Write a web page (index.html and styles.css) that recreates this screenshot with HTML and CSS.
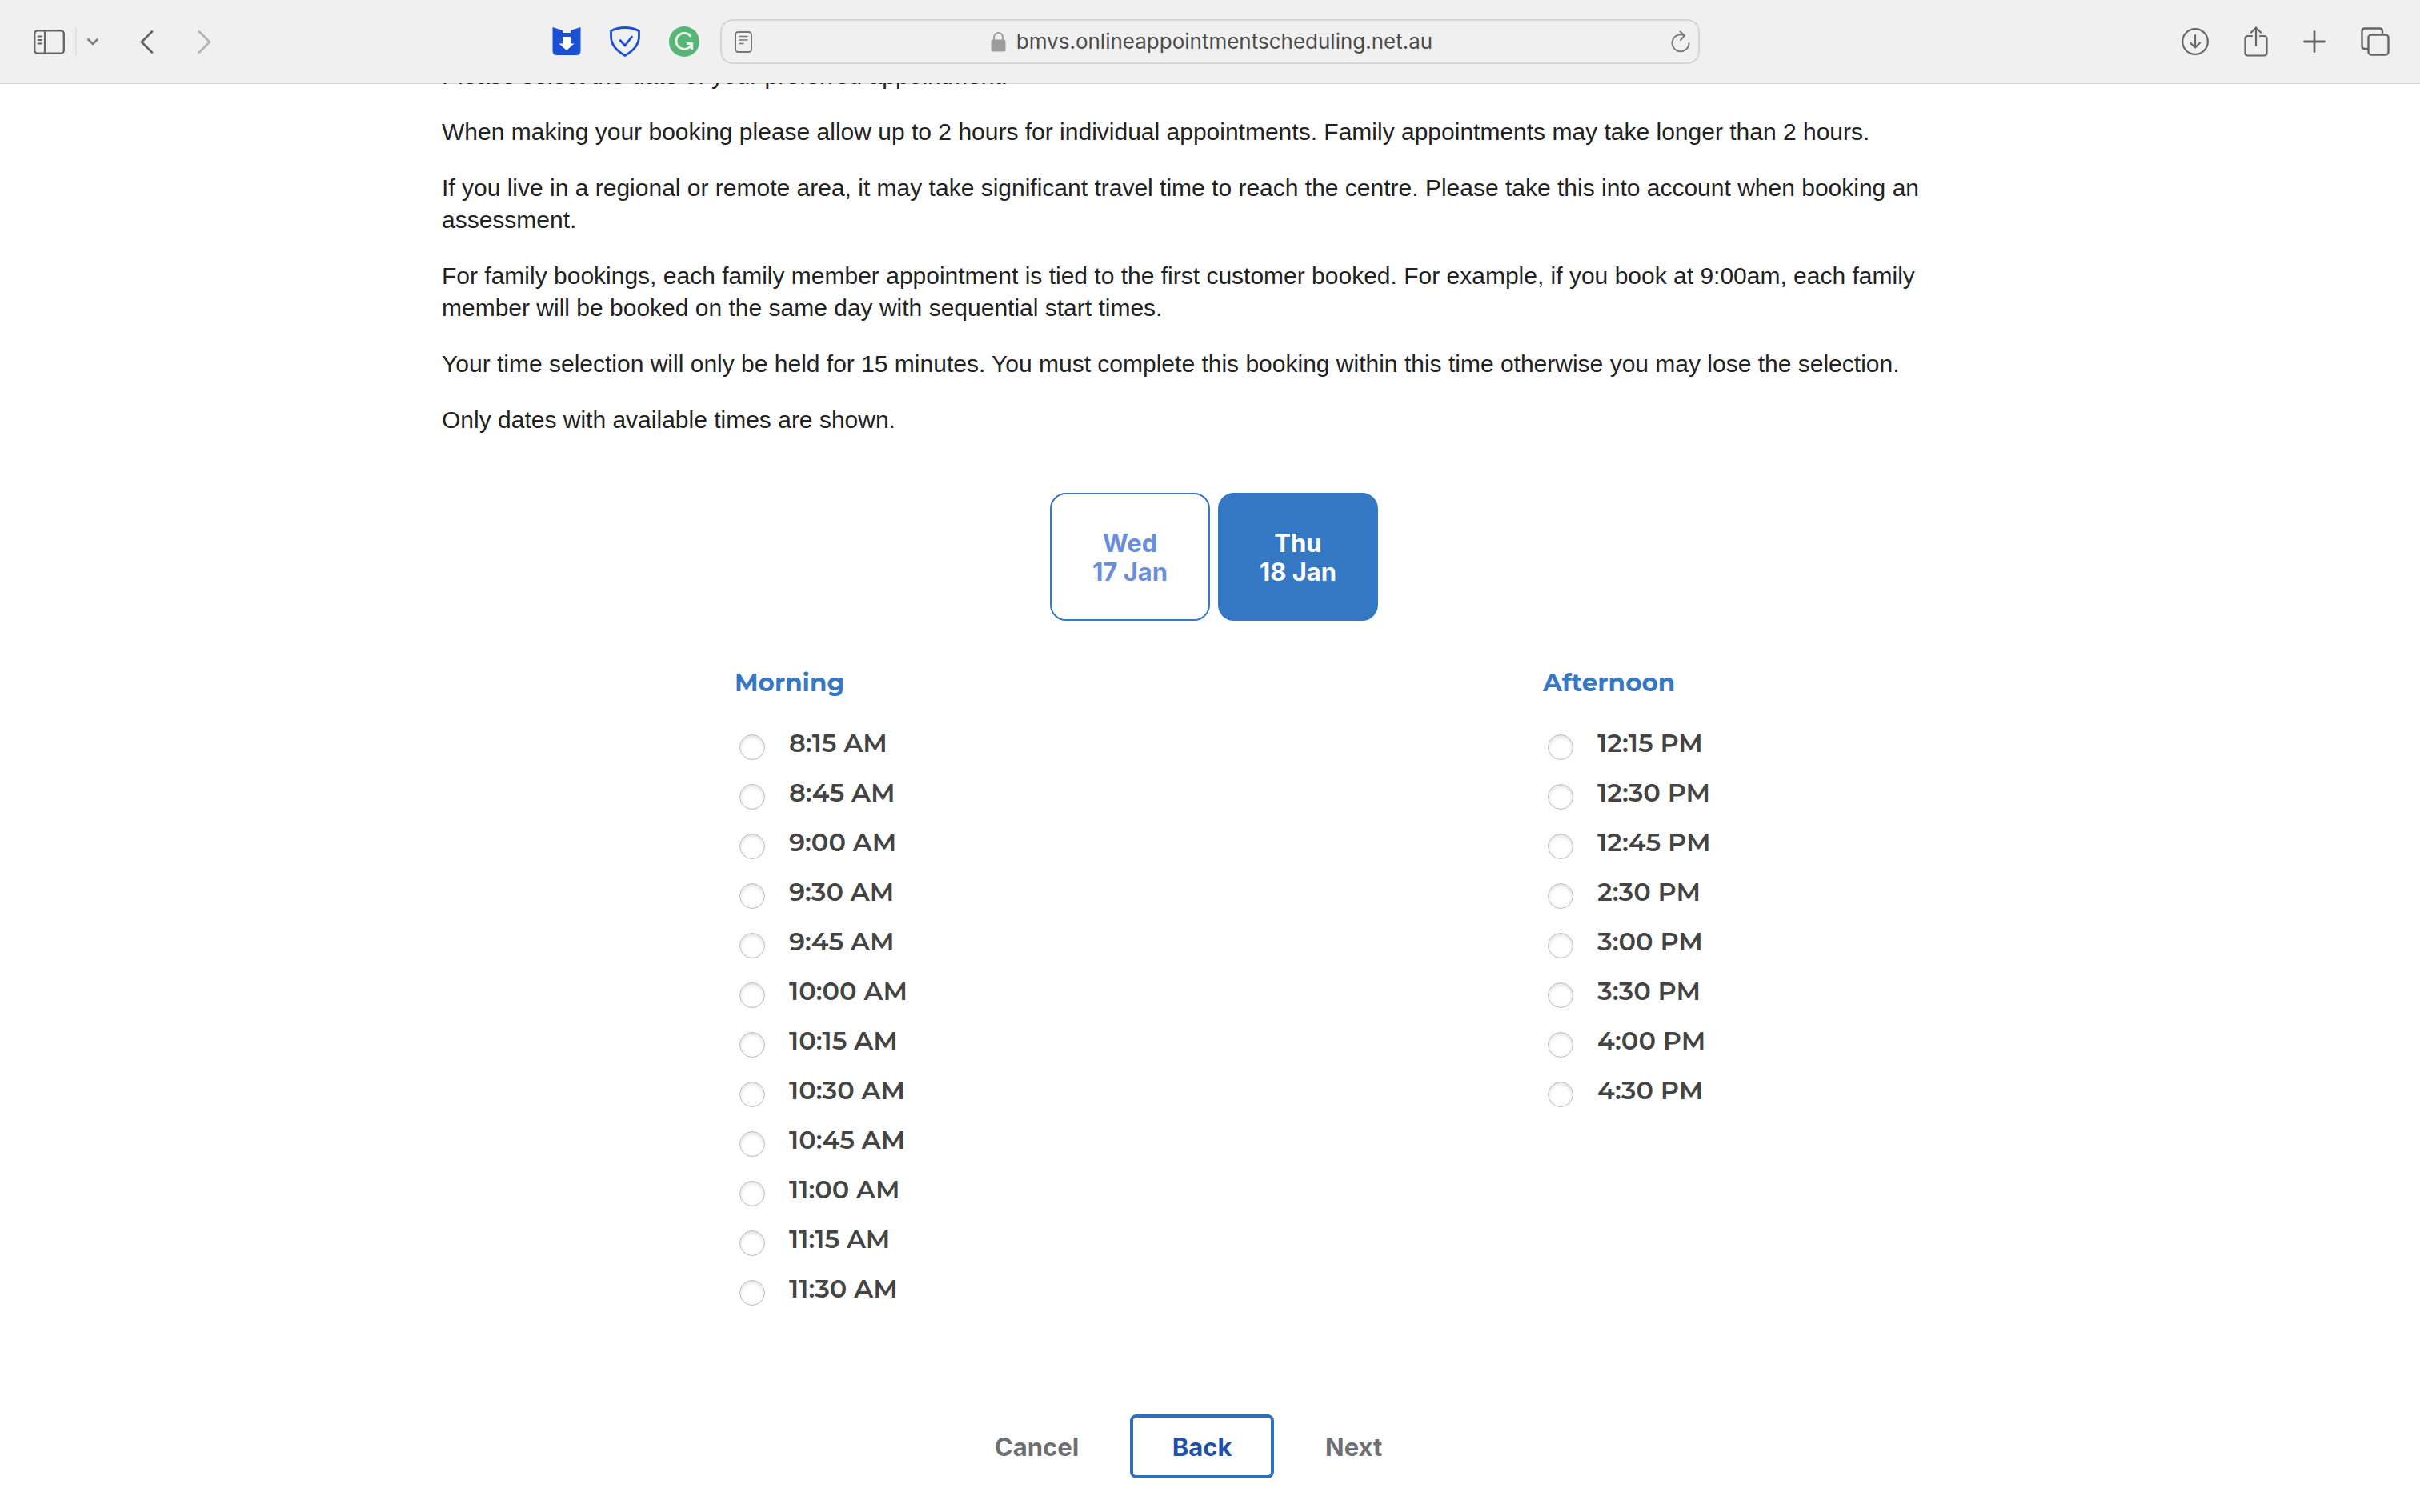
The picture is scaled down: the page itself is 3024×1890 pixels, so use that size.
FILE: index.html
```html
<!DOCTYPE html>
<html lang="en">
<head>
<meta charset="utf-8">
<meta name="viewport" content="width=device-width, initial-scale=1">
<title>Select a date and time</title>
<link rel="stylesheet" href="styles.css">
</head>
<body>
<header class="toolbar">
  <div class="tools tools-start">
    <button class="tool sidebar" aria-label="Show sidebar"><svg width="39" height="31" viewBox="0 0 39 31" fill="none" stroke="#666"><rect x="1.2" y="1.2" width="36.6" height="28.6" rx="4" stroke-width="2.4"/><path d="M14 1v29" stroke-width="2.2"/><path d="M5.5 8.500h4.500M5.500 13h4.500M5.500 17.500h4.500" stroke-width="1.800" stroke-linecap="round"/></svg></button>
    <span class="divider"></span>
    <button class="tool tabgroup" aria-label="Tab groups"><svg width="14" height="9" viewBox="0 0 14 9" fill="none" stroke="#7f7f84" stroke-width="2.800" stroke-linecap="round" stroke-linejoin="round"><path d="M1.500 1.500L7 7l5.500-5.500"/></svg></button>
    <button class="tool back" aria-label="Go back"><svg width="17" height="29" viewBox="0 0 17 29" fill="none" stroke="#666" stroke-width="2.800" stroke-linecap="round" stroke-linejoin="round"><path d="M15 1.500L2 14.500l13 13"/></svg></button>
    <button class="tool forward" aria-label="Go forward"><svg width="17" height="29" viewBox="0 0 17 29" fill="none" stroke="#b4b4b4" stroke-width="2.800" stroke-linecap="round" stroke-linejoin="round"><path d="M2 1.500l13 13-13 13"/></svg></button>
  </div>
  <div class="tools extensions">
    <button class="tool" aria-label="Downloader"><svg width="36" height="38" viewBox="0 0 36 38"><path d="M.500 1L13 5v3h10V5l12.500-4v29.500q0 5.500-5.500 5.500H6q-5.500 0-5.500-5.500z" fill="#1a4fd6"/><path d="M13 13h10v8.500h4.500L18 30l-9.500-8.500H13z" fill="#fff" /></svg></button>
    <button class="tool" aria-label="Ad blocker"><svg width="38" height="38" viewBox="0 0 38 38" fill="none" stroke="#1a4fd6" stroke-width="2.800" stroke-linejoin="round" stroke-linecap="round"><path d="M1.500 5.500Q10 1.500 19 1.500t17.500 4v7q0 14-17.500 24Q1.500 26.500 1.500 12.500z"/><path d="M13 17.500l6 6.500 8.500-11"/></svg></button>
    <button class="tool" aria-label="Writing assistant"><svg width="38" height="38" viewBox="0 0 38 38" fill="none"><circle cx="19" cy="19" r="19" fill="#57b576"/><path d="M27.500 13a10 10 0 1 0 1 8.500H22M28.800 21v8" stroke="#f0f0f0" stroke-width="2.800"/></svg></button>
  </div>
  <div class="address">
    <button class="tool" aria-label="Show reader"><svg width="22" height="27" viewBox="0 0 22 27" fill="none" stroke="#777"><rect x="1" y="1" width="20" height="25" rx="3.500" stroke-width="2"/><path d="M5.500 6.500h11M5.500 11h11M5.500 15.500h6" stroke-width="1.500"/></svg></button>
    <div class="site">
      <svg width="19" height="26" viewBox="0 0 19 26"><rect x=".5" y="10.500" width="18" height="15" rx="2.500" fill="#9d9d9d"/><path d="M4 12V7.500a5.500 5.500 0 0 1 11 0V12" fill="none" stroke="#9d9d9d" stroke-width="2"/></svg>
      <span>bmvs.onlineappointmentscheduling.net.au</span>
    </div>
    <button class="tool" aria-label="Reload"><svg width="24" height="28" viewBox="0 0 24 28" fill="none" stroke="#7c7c7c" stroke-width="2" stroke-linecap="round" stroke-linejoin="round"><path d="M16.500 6.300A10.500 10.500 0 1 0 22.500 16"/><path d="M11.500 1.500l5.500 5-5 5.500"/></svg></button>
  </div>
  <div class="tools tools-end">
    <button class="tool" aria-label="Downloads"><svg width="34" height="34" viewBox="0 0 34 34" fill="none" stroke="#666" stroke-width="2.200" stroke-linecap="round" stroke-linejoin="round"><circle cx="17" cy="17" r="15.800"/><path d="M17 9v15.500M11 18.500l6 6 6-6"/></svg></button>
    <button class="tool" aria-label="Share"><svg width="30" height="38" viewBox="0 0 30 38" fill="none" stroke="#666" stroke-width="2.200" stroke-linecap="round" stroke-linejoin="round"><path d="M10 12H5q-3.500 0-3.500 3.500V33q0 3.500 3.500 3.500h20q3.500 0 3.500-3.500V15.500Q28.500 12 25 12h-5M15 24V2M9 7.500L15 1.500l6 6"/></svg></button>
    <button class="tool" aria-label="New tab"><svg width="28" height="28" viewBox="0 0 28 28" fill="none" stroke="#666" stroke-width="2.800" stroke-linecap="round"><path d="M14 1.500v25M1.500 14h25"/></svg></button>
    <button class="tool" aria-label="Tab overview"><svg width="36" height="36" viewBox="0 0 36 36" fill="none" stroke="#666" stroke-width="2.400"><path d="M9.500 27H5q-3.500 0-3.500-3.500V5Q1.500 1.500 5 1.500h18.500Q27 1.500 27 5v4.500"/><rect x="9.500" y="9.500" width="25" height="25" rx="3.500"/></svg></button>
  </div>
</header>

<main class="page">
  <div class="intro">
    <p>Please select the date of your preferred appointment.</p>
    <p>When making your booking please allow up to 2 hours for individual appointments. Family appointments may take longer than 2 hours.</p>
    <p>If you live in a regional or remote area, it may take significant travel time to reach the centre. Please take this into account when booking an assessment.</p>
    <p>For family bookings, each family member appointment is tied to the first customer booked. For example, if you book at 9:00am, each family member will be booked on the same day with sequential start times.</p>
    <p>Your time selection will only be held for 15 minutes. You must complete this booking within this time otherwise you may lose the selection.</p>
    <p>Only dates with available times are shown.</p>
  </div>

  <div class="dates">
    <button class="date">Wed<br>17 Jan</button>
    <button class="date date-selected" aria-pressed="true">Thu<br>18 Jan</button>
  </div>

  <form class="booking">
    <div class="times">
      <fieldset class="slots">
        <legend>Morning</legend>
        <label class="slot"><input type="radio" name="time"><span>8:15 AM</span></label>
        <label class="slot"><input type="radio" name="time"><span>8:45 AM</span></label>
        <label class="slot"><input type="radio" name="time"><span>9:00 AM</span></label>
        <label class="slot"><input type="radio" name="time"><span>9:30 AM</span></label>
        <label class="slot"><input type="radio" name="time"><span>9:45 AM</span></label>
        <label class="slot"><input type="radio" name="time"><span>10:00 AM</span></label>
        <label class="slot"><input type="radio" name="time"><span>10:15 AM</span></label>
        <label class="slot"><input type="radio" name="time"><span>10:30 AM</span></label>
        <label class="slot"><input type="radio" name="time"><span>10:45 AM</span></label>
        <label class="slot"><input type="radio" name="time"><span>11:00 AM</span></label>
        <label class="slot"><input type="radio" name="time"><span>11:15 AM</span></label>
        <label class="slot"><input type="radio" name="time"><span>11:30 AM</span></label>
      </fieldset>
      <fieldset class="slots">
        <legend>Afternoon</legend>
        <label class="slot"><input type="radio" name="time"><span>12:15 PM</span></label>
        <label class="slot"><input type="radio" name="time"><span>12:30 PM</span></label>
        <label class="slot"><input type="radio" name="time"><span>12:45 PM</span></label>
        <label class="slot"><input type="radio" name="time"><span>2:30 PM</span></label>
        <label class="slot"><input type="radio" name="time"><span>3:00 PM</span></label>
        <label class="slot"><input type="radio" name="time"><span>3:30 PM</span></label>
        <label class="slot"><input type="radio" name="time"><span>4:00 PM</span></label>
        <label class="slot"><input type="radio" name="time"><span>4:30 PM</span></label>
      </fieldset>
    </div>
    <div class="actions">
      <button type="button" class="action">Cancel</button>
      <button type="button" class="action action-outline">Back</button>
      <button type="submit" class="action">Next</button>
    </div>
  </form>
</main>
</body>
</html>
```
FILE: styles.css
```css
* { box-sizing: border-box; }

body {
  margin: 0;
  background: #fff;
  color: #222;
  font-family: "Liberation Sans", Arial, sans-serif;
  font-size: 30px;
  line-height: 40px;
}

button { font: inherit; cursor: pointer; }
svg { display: block; }

/* Browser toolbar */
.toolbar {
  position: sticky;
  top: 0;
  z-index: 1;
  display: grid;
  grid-template-columns: 1fr 1224px 1fr;
  align-items: center;
  height: 105px;
  background: #f0f0f0;
  background-clip: padding-box;
  border-bottom: 1px solid rgba(0, 0, 0, .16);
}
.tool { padding: 0; border: 0; background: none; }
.tools { display: flex; align-items: center; }
.tools-start { grid-area: 1 / 1; padding-left: 42px; }
.divider { width: 2px; height: 36px; margin: 0 13px; background: #e2e2e2; }
.back { margin-left: 52px; }
.forward { margin-left: 55px; }
.extensions { grid-area: 1 / 1; justify-self: end; gap: 36px; padding-right: 26px; }
.address {
  grid-area: 1 / 2;
  display: flex;
  align-items: center;
  justify-content: space-between;
  height: 56px;
  padding: 0 10px 0 16px;
  border: 2px solid #d4d4d4;
  border-radius: 16px;
}
.site {
  display: flex;
  align-items: center;
  gap: 13px;
  color: #4c4c4c;
  font-family: Inter, sans-serif;
  font-size: 26px;
  line-height: 42px;
}
.tools-end { grid-area: 1 / 3; justify-self: end; gap: 44px; padding-right: 38px; }

/* Appointment page */
.page {
  max-width: 1920px;
  margin: -30px auto 0;
  padding-bottom: 40px;
}
.intro { display: grid; gap: 30px; }
.intro p { margin: 0; }

.dates {
  display: flex;
  justify-content: center;
  gap: 10px;
  margin-top: 71px;
  padding-left: 10px;
}
.date {
  width: 200px;
  height: 160px;
  padding: 2px 0 0;
  border: 2px solid #3578c4;
  border-radius: 20px;
  background: #fff;
  color: #6b8ddd;
  font: bold 31px/36px Inter, sans-serif;
}
.date-selected { background: #3578c4; color: #fff; }

.times {
  display: grid;
  grid-template-columns: 13fr 7fr;
  margin-top: 56px;
  padding-left: 366px;
}
.slots { min-width: 0; margin: 0; padding: 0; border: 0; }
.slots legend {
  padding: 0;
  margin-bottom: 34px;
  color: #3578c4;
  font: bold 31px/42px Montserrat, Inter, sans-serif;
}
.slot {
  display: flex;
  align-items: flex-start;
  gap: 30px;
  height: 62px;
  padding-left: 6px;
  color: #444;
  font: 600 32px/42px Montserrat, Inter, sans-serif;
}
.slot input {
  appearance: none;
  width: 32px;
  height: 32px;
  margin: 10px 0 0;
  border: 1px solid #bcbcbc;
  border-radius: 50%;
  background: #fff;
  box-shadow: inset 0 2px 5px rgba(0, 0, 0, .14);
}
.slot input:checked { background: #3578c4; }

.actions {
  display: flex;
  align-items: center;
  justify-content: center;
  gap: 64px;
  margin-top: 116px;
  padding-right: 54px;
}
.action {
  padding: 2px 0 0;
  border: 0;
  background: none;
  color: #6e6f73;
  font: bold 31px/40px Inter, sans-serif;
}
.action-outline {
  width: 180px;
  height: 80px;
  border: 4px solid #2f70b8;
  border-radius: 8px;
  color: #1f50a8;
}
```
